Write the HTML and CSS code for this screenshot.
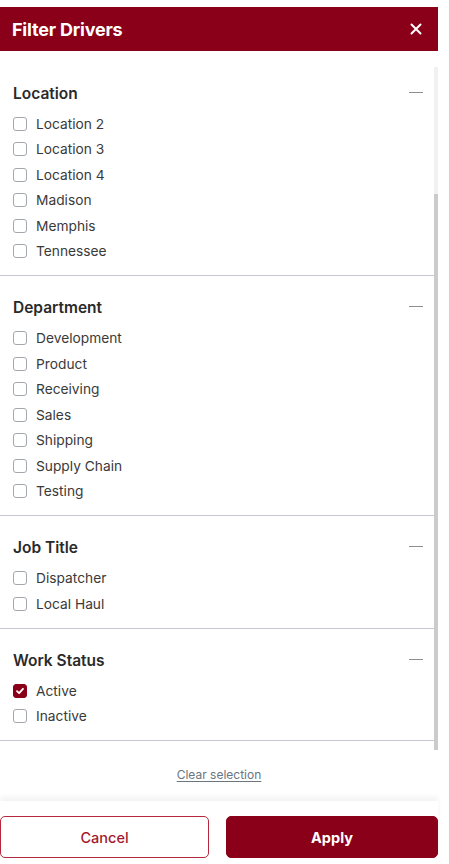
FILE: index.html
```html
<!DOCTYPE html>
<html lang="en">
<head>
<meta charset="utf-8">
<title>Filter Drivers</title>
<link rel="stylesheet" href="styles.css">
</head>
<body>
<div class="panel">
  <header class="header">
    <h1 class="title">Filter Drivers</h1>
    <button class="close" aria-label="Close">
      <svg width="12" height="12" viewBox="0 0 12 12"><path d="M1.5 1.5 L10.5 10.5 M10.5 1.5 L1.5 10.5" stroke="#fff" stroke-width="2" stroke-linecap="round"/></svg>
    </button>
  </header>

  <div class="body">
    <div class="list">
      <section class="group">
        <div class="group-head"><h2>Location</h2><span class="dash"></span></div>
        <label class="opt"><span class="box"></span>Location 2</label>
        <label class="opt"><span class="box"></span>Location 3</label>
        <label class="opt"><span class="box"></span>Location 4</label>
        <label class="opt"><span class="box"></span>Madison</label>
        <label class="opt"><span class="box"></span>Memphis</label>
        <label class="opt"><span class="box"></span>Tennessee</label>
      </section>
      <section class="group">
        <div class="group-head"><h2>Department</h2><span class="dash"></span></div>
        <label class="opt"><span class="box"></span>Development</label>
        <label class="opt"><span class="box"></span>Product</label>
        <label class="opt"><span class="box"></span>Receiving</label>
        <label class="opt"><span class="box"></span>Sales</label>
        <label class="opt"><span class="box"></span>Shipping</label>
        <label class="opt"><span class="box"></span>Supply Chain</label>
        <label class="opt"><span class="box"></span>Testing</label>
      </section>
      <section class="group">
        <div class="group-head"><h2>Job Title</h2><span class="dash"></span></div>
        <label class="opt"><span class="box"></span>Dispatcher</label>
        <label class="opt"><span class="box"></span>Local Haul</label>
      </section>
      <section class="group">
        <div class="group-head"><h2>Work Status</h2><span class="dash"></span></div>
        <label class="opt"><span class="box checked"><svg width="10" height="10" viewBox="0 0 10 10"><path d="M2 5.2 L4.1 7.2 L8 2.8" fill="none" stroke="#fff" stroke-width="1.8" stroke-linecap="round" stroke-linejoin="round"/></svg></span>Active</label>
        <label class="opt"><span class="box"></span>Inactive</label>
      </section>
    </div>
    <div class="scrollbar"><div class="thumb"></div></div>
  </div>

  <div class="clear-row"><a class="clear" href="#">Clear selection</a></div>

  <footer class="footer">
    <button class="btn btn-cancel">Cancel</button>
    <button class="btn btn-apply">Apply</button>
  </footer>
</div>
</body>
</html>
```

FILE: styles.css
```css
* { box-sizing: border-box; }
html, body { margin: 0; padding: 0; background: #fff; }
body { font-family: Inter, "Noto Sans", "Liberation Sans", sans-serif; color: #2b2b2b; }

.panel { width: 438px; padding-top: 7px; }

.header {
  height: 44px;
  background: #8a0019;
  display: flex;
  align-items: center;
  justify-content: space-between;
  padding: 0 16px 0 12px;
}
.title { margin: 0; font-size: 18px; font-weight: 700; color: #fff; letter-spacing: -0.2px; }
.close { background: none; border: 0; padding: 0; display: flex; cursor: pointer; }

.body { display: flex; height: 699px; }
.list { width: 434px; padding-top: 11px; }
.scrollbar {
  width: 4px;
  margin-top: 16px;
  height: 683px;
  background: #f1f1f1;
  display: flex;
  flex-direction: column;
  justify-content: flex-end;
}
.thumb { height: 556px; background: #cbcbcb; }

.group { padding: 21.5px 0 11px 0; border-bottom: 1px solid #c6cacf; }
.group:first-child { padding-top: 21px; }
.group-head { display: flex; align-items: center; justify-content: space-between; height: 20px; margin-bottom: 8px; padding: 0 11px 0 13px; }
.group-head h2 { margin: 0; font-size: 15.5px; font-weight: 600; color: #2a2a2a; }
.dash { width: 14px; height: 1px; background: #8e8e8e; margin-top: -2px; }

.opt { display: flex; align-items: center; height: 25.5px; padding-left: 13px; font-size: 13.75px; color: #3a3a3a; }
.box {
  width: 14px; height: 14px; border: 1.5px solid #a3a8ae; border-radius: 3px;
  margin-right: 9px; display: flex; align-items: center; justify-content: center; flex: none;
}
.box.checked { background: #8a0019; border-color: #8a0019; }

.clear-row { height: 51px; display: flex; justify-content: center; align-items: center; padding-bottom: 2px; }
.clear { font-size: 12px; color: #6a7580; text-decoration: underline; text-underline-offset: 2px; }

.footer {
  display: flex;
  gap: 17px;
  padding: 15px 0 6px 0;
  background: #fff;
  box-shadow: 0 -4px 6px rgba(0,0,0,0.05);
  position: relative;
}
.btn {
  flex: 1; height: 42px; border-radius: 5px; font-family: inherit; font-size: 14.5px; cursor: pointer;
}
.btn-cancel { flex: 0 0 209px; background: #fff; border: 1px solid #b3283d; color: #a3172d; font-weight: 500; }
.btn-apply { flex: 0 0 212px; background: #8a0019; border: 1px solid #8a0019; color: #fff; font-weight: 700; }
```
